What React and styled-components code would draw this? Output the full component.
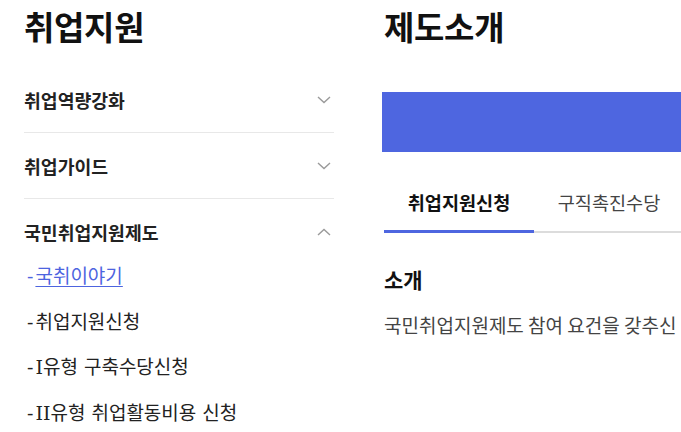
import React, { useState } from "react";
import styled, { createGlobalStyle } from "styled-components";

const GlobalStyle = createGlobalStyle`
  body {
    margin: 0;
    background: #fff;
    font-family: "Noto Sans CJK KR", "Noto Sans", sans-serif;
    color: #111;
    overflow: hidden;
  }
`;

const menuData = [
  { id: 1, title: "취업역량강화", list: [] },
  { id: 2, title: "취업가이드", list: [] },
  {
    id: 3,
    title: "국민취업지원제도",
    list: ["국취이야기", "취업지원신청", "I유형 구축수당신청", "II유형 취업활동비용 신청"],
  },
];

const tabs = ["취업지원신청", "구직촉진수당"];

const Chevron = ({ up }) => (
  <svg width="14" height="8" viewBox="0 0 14 8" fill="none">
    <polyline
      points={up ? "1,7 7,1.5 13,7" : "1,1 7,6.5 13,1"}
      stroke="#9a9a9a"
      strokeWidth="1.4"
    />
  </svg>
);

const App = () => {
  const [openId, setOpenId] = useState(3);
  const [activeTab, setActiveTab] = useState(0);

  return (
    <>
      <GlobalStyle />
      <Page>
        <Sidebar>
          <PageTitle>취업지원</PageTitle>
          <Menu>
            {menuData.map((x) => {
              const open = openId === x.id;
              return (
                <li key={x.id}>
                  <MenuRow $open={open} onClick={() => setOpenId(open ? 0 : x.id)}>
                    <span>{x.title}</span>
                    <Chevron up={open} />
                  </MenuRow>
                  {open && x.list.length > 0 && (
                    <SubMenu>
                      {x.list.map((item, index) => (
                        <SubItem key={index} $active={index === 0}>
                          <a href="#">{item}</a>
                        </SubItem>
                      ))}
                    </SubMenu>
                  )}
                </li>
              );
            })}
          </Menu>
        </Sidebar>

        <Main>
          <PageTitle>제도소개</PageTitle>
          <Banner />
          <TabBar>
            {tabs.map((t, index) => (
              <Tab
                key={index}
                $active={activeTab === index}
                onClick={() => setActiveTab(index)}
              >
                {t}
              </Tab>
            ))}
          </TabBar>
          <Section>
            <h3>소개</h3>
            <p>국민취업지원제도 참여 요건을 갖추신</p>
          </Section>
        </Main>
      </Page>
    </>
  );
};

const Page = styled.div`
  display: flex;
  align-items: flex-start;
  gap: 50px;
  width: 1100px;
  padding: 0 24px;
`;

const Sidebar = styled.aside`
  width: 310px;
  flex-shrink: 0;
`;

const PageTitle = styled.h1`
  margin: 0;
  padding-top: 4px;
  font-size: 33px;
  line-height: 45px;
  font-weight: 700;
  color: #111;
  letter-spacing: -0.3px;
`;

const Menu = styled.ul`
  list-style: none;
  margin: 18px 0 0;
  padding: 0;
`;

const MenuRow = styled.div`
  display: flex;
  align-items: center;
  justify-content: space-between;
  height: 65px;
  padding-right: 3px;
  border-bottom: 1px solid ${({ $open }) => ($open ? "transparent" : "#e8e8e8")};
  font-size: 18.3px;
  font-weight: 700;
  color: #222;
  cursor: pointer;
`;

const SubMenu = styled.ul`
  list-style: none;
  margin: 0;
  padding: 0;
  display: flex;
  flex-direction: column;
  gap: 23.5px;
`;

const SubItem = styled.li`
  height: 22px;
  line-height: 22px;
  font-family: "DejaVu Serif", "Noto Sans CJK KR", serif;
  font-size: 19px;
  color: ${({ $active }) => ($active ? "#4d64df" : "#222")};
  padding-left: 3px;

  &::before {
    content: "-";
    margin-right: 2px;
  }

  a {
    color: inherit;
    text-decoration: ${({ $active }) => ($active ? "underline" : "none")};
    text-underline-offset: 3px;
  }
`;

const Main = styled.main`
  flex: 1;
  min-width: 0;
`;

const Banner = styled.div`
  margin: 43px 0 0 -2px;
  height: 60px;
  background: #4e66e0;
`;

const TabBar = styled.div`
  display: flex;
  margin-top: 20px;
  border-bottom: 2px solid #dcdcdc;
`;

const Tab = styled.button`
  position: relative;
  width: 150px;
  height: 59px;
  border: none;
  background: none;
  padding: 0;
  font-family: inherit;
  font-size: 18.6px;
  font-weight: ${({ $active }) => ($active ? 700 : 400)};
  color: ${({ $active }) => ($active ? "#111" : "#444")};
  cursor: pointer;

  &::after {
    content: "";
    display: ${({ $active }) => ($active ? "block" : "none")};
    position: absolute;
    left: 0;
    right: 0;
    bottom: -2px;
    height: 3px;
    background: #4e66e0;
  }
`;

const Section = styled.section`
  margin-top: 33px;

  h3 {
    margin: 0;
    font-size: 21px;
    line-height: 27px;
    font-weight: 700;
    color: #111;
  }

  p {
    margin: 18px 0 0;
    font-size: 19px;
    line-height: 27px;
    color: #444;
    white-space: nowrap;
  }
`;

export default App;
